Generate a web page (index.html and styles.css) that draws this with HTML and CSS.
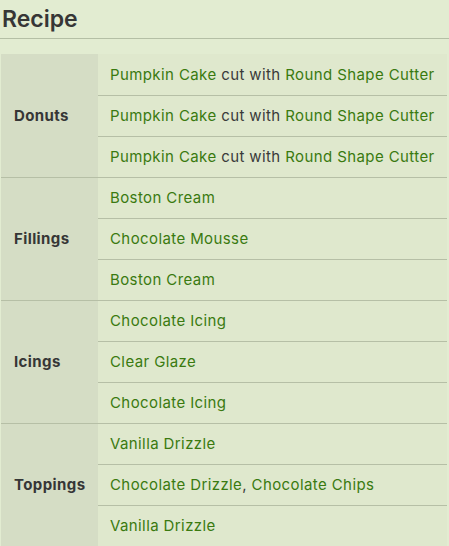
FILE: index.html
```html
<!DOCTYPE html>
<html>
<head>
<meta charset="utf-8">
<link rel="stylesheet" href="styles.css">
</head>
<body>
<h2 class="title">Recipe</h2>
<table class="recipe">
  <tbody>
    <tr class="group-start"><th rowspan="3">Donuts</th><td><a>Pumpkin Cake</a> cut with <a>Round Shape Cutter</a></td></tr>
    <tr><td><a>Pumpkin Cake</a> cut with <a>Round Shape Cutter</a></td></tr>
    <tr><td><a>Pumpkin Cake</a> cut with <a>Round Shape Cutter</a></td></tr>
    <tr class="group-start"><th rowspan="3">Fillings</th><td><a>Boston Cream</a></td></tr>
    <tr><td><a>Chocolate Mousse</a></td></tr>
    <tr><td><a>Boston Cream</a></td></tr>
    <tr class="group-start"><th rowspan="3">Icings</th><td><a>Chocolate Icing</a></td></tr>
    <tr><td><a>Clear Glaze</a></td></tr>
    <tr><td><a>Chocolate Icing</a></td></tr>
    <tr class="group-start"><th rowspan="3">Toppings</th><td><a>Vanilla Drizzle</a></td></tr>
    <tr><td><a>Chocolate Drizzle</a>, <a>Chocolate Chips</a></td></tr>
    <tr><td><a>Vanilla Drizzle</a></td></tr>
  </tbody>
</table>
</body>
</html>
```
FILE: styles.css
```css
html, body {
  margin: 0;
  padding: 0;
  background: #e2ecd1;
}
body {
  font-family: Inter, "Open Sans", sans-serif;
  color: #3a3a3a;
}
.title {
  margin: 0;
  padding: 5px 2px 0;
  height: 33px;
  font-size: 23px;
  font-weight: 600;
  line-height: 28px;
  color: #363636;
  border-bottom: 1px solid #b4bfa5;
}
.recipe {
  margin: 15px 0 0 1px;
  width: 446px;
  border-collapse: collapse;
  font-size: 15px;
  letter-spacing: 0.4px;
}
.recipe th {
  width: 97px;
  box-sizing: border-box;
  background: #d5ddc5;
  text-align: left;
  padding: 0 0 0 13px;
  font-weight: 700;
  color: #363636;
  vertical-align: middle;
}
.recipe td {
  background: #dfe8cd;
  height: 41px;
  padding: 0 0 0 12px;
  box-sizing: border-box;
  vertical-align: middle;
  border-top: 1px solid #b6bfa6;
}
.recipe tr:first-child td { border-top: none; }
.recipe tr.group-start th { border-top: 1px solid #b6bfa6; }
.recipe tr:first-child th { border-top: none; }
.recipe a {
  color: #3a7a10;
}
```
